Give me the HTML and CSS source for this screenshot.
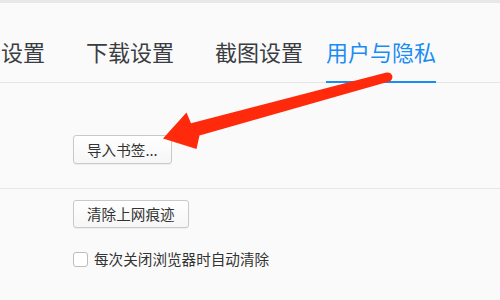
FILE: index.html
```html
<!DOCTYPE html>
<html lang="zh-CN">
<head>
<meta charset="utf-8">
<title>用户与隐私</title>
<link rel="stylesheet" href="styles.css">
</head>
<body>
<div class="topband"></div>
<nav class="tabs">
  <span class="tab">设置</span>
  <span class="tab">下载设置</span>
  <span class="tab">截图设置</span>
  <span class="tab active">用户与隐私</span>
</nav>
<section class="sec sec-bookmarks">
  <button class="btn">导入书签...</button>
</section>
<section class="sec sec-history">
  <button class="btn">清除上网痕迹</button>
  <label class="check"><span class="box"></span><span class="check-text">每次关闭浏览器时自动清除</span></label>
</section>
<svg class="arrow" width="500" height="300" viewBox="0 0 500 300" xmlns="http://www.w3.org/2000/svg">
  <path d="M163 138.5 L186.5 112.5 L191 123.2 L386.5 72.6 A4.6 4.6 0 0 1 389.2 81.4 L199.5 135.5 L196.5 149 Z" fill="#ff2a0c"/>
</svg>
</body>
</html>
```
FILE: styles.css
```css
html, body {
  margin: 0;
  padding: 0;
}
body {
  width: 500px;
  height: 300px;
  overflow: hidden;
  background: #fafafa;
  font-family: "Noto Sans CJK SC", "Noto Sans", sans-serif;
  color: #333;
  position: relative;
}
.topband {
  height: 3px;
  background: #e8e8e8;
}
.tabs {
  display: flex;
  gap: 41px;
  padding: 37px 0 0 1px;
  border-bottom: 1px solid #e6e6e6;
  font-size: 22px;
  line-height: 22px;
  color: #3a3d41;
  white-space: nowrap;
}
.tab {
  padding-bottom: 19px;
}
.tab.active {
  margin-left: -18px;
  color: #1a8cf5;
  border-bottom: 2px solid #1a8cf5;
  margin-bottom: -1px;
}
.sec {
  display: flex;
  flex-direction: column;
  align-items: flex-start;
  padding-left: 73px;
}
.sec-bookmarks {
  padding-top: 52px;
  padding-bottom: 24px;
  border-bottom: 1px solid #e6e6e6;
}
.sec-history {
  padding-top: 11px;
}
.btn {
  box-sizing: border-box;
  height: 29px;
  padding: 0 13px;
  margin: 0;
  font-family: inherit;
  font-size: 14.6px;
  line-height: 18px;
  color: #333;
  background: linear-gradient(#ffffff, #f6f6f6);
  border: 1px solid #c9c9c9;
  border-radius: 3px;
  box-shadow: 0 1px 1px rgba(0,0,0,0.05);
}
.sec-history .btn {
  height: 28px;
}
.check {
  display: flex;
  align-items: flex-start;
  gap: 6px;
  margin-top: 21px;
  font-size: 14.6px;
  line-height: 20px;
  color: #333;
}
.box {
  box-sizing: border-box;
  width: 15px;
  height: 15px;
  margin-top: 3px;
  background: #fff;
  border: 1px solid #bdbdbd;
  border-radius: 3px;
}
.arrow {
  position: absolute;
  left: 0;
  top: 0;
  pointer-events: none;
}
```
